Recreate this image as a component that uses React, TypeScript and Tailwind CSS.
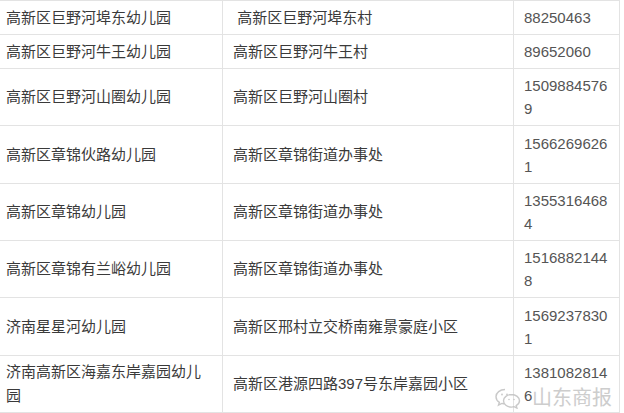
import React from "react";

type Row = { a: string; b: string; c: string; h: string };

const rows: Row[] = [
  { a: "高新区巨野河埠东幼儿园", b: "\u00a0高新区巨野河埠东村", c: "88250463", h: "h-[34px]" },
  { a: "高新区巨野河牛王幼儿园", b: "高新区巨野河牛王村", c: "89652060", h: "h-[34px]" },
  { a: "高新区巨野河山圈幼儿园", b: "高新区巨野河山圈村", c: "15098845769", h: "h-[57px]" },
  { a: "高新区章锦伙路幼儿园", b: "高新区章锦街道办事处", c: "15662696261", h: "h-[58px]" },
  { a: "高新区章锦幼儿园", b: "高新区章锦街道办事处", c: "13553164684", h: "h-[57px]" },
  { a: "高新区章锦有兰峪幼儿园", b: "高新区章锦街道办事处", c: "15168821448", h: "h-[57px]" },
  { a: "济南星星河幼儿园", b: "高新区邢村立交桥南雍景豪庭小区", c: "15692378301", h: "h-[58px]" },
  { a: "济南高新区海嘉东岸嘉园幼儿园", b: "高新区港源四路397号东岸嘉园小区", c: "13810828146", h: "h-[57px]" },
];

function WeChatIcon() {
  return (
    <svg width="28" height="22" viewBox="0 0 28 22" fill="none" stroke="#c4c4c4" strokeWidth="1.4">
      <path d="M11 2.5c-5 0-9 3.2-9 7.2 0 2.3 1.3 4.3 3.4 5.6l-0.9 2.8 3.3-1.7c1 0.3 2.1 0.5 3.2 0.5" />
      <path d="M17.5 7.5c-4.4 0-8 2.8-8 6.3s3.6 6.3 8 6.3c0.9 0 1.8-0.1 2.6-0.4l2.8 1.4-0.7-2.4c2-1.2 3.3-3 3.3-4.9 0-3.5-3.6-6.3-8-6.3z" />
      <circle cx="8" cy="7.5" r="0.9" fill="#c4c4c4" stroke="none" />
      <circle cx="13" cy="7.5" r="0.9" fill="#c4c4c4" stroke="none" />
      <circle cx="15" cy="12.5" r="0.8" fill="#c4c4c4" stroke="none" />
      <circle cx="20" cy="12.5" r="0.8" fill="#c4c4c4" stroke="none" />
    </svg>
  );
}

export default function App() {
  return (
    <div
      className="relative w-[624px] h-[413px] overflow-hidden bg-white text-[15px]"
      style={{ fontFamily: '"Liberation Sans", "Noto Sans CJK SC", sans-serif' }}
    >
      <div className="grid grid-cols-[223px_291px_106px] w-[620px] border-t border-[#e3e3e3]">
        {rows.map((r, i) => (
          <React.Fragment key={i}>
            <div className={`${r.h} flex items-center pl-[6px] pr-[12px] border-r border-b border-[#e3e3e3] text-[#3a3a3a] leading-[24px]`}>
              <span>{r.a}</span>
            </div>
            <div className={`${r.h} flex items-center pl-[10px] pr-[10px] border-r border-b border-[#e3e3e3] text-[#3a3a3a] leading-[24px]`}>
              <span>{r.b}</span>
            </div>
            <div className={`${r.h} flex items-center pl-[10px] pr-[8px] border-r border-b border-[#e3e3e3] text-[#555555] leading-[23px]`}>
              <span className="break-all">{r.c}</span>
            </div>
          </React.Fragment>
        ))}
      </div>
      <div className="absolute left-[494px] top-[387px] flex items-center gap-[10px] opacity-90">
        <WeChatIcon />
        <span className="text-[20px] leading-[22px] text-[#c8c8c8] tracking-[0px]">山东商报</span>
      </div>
    </div>
  );
}
